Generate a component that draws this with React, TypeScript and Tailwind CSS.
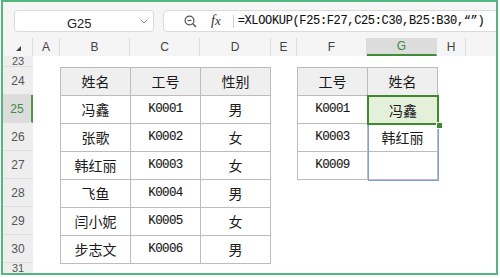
import React from "react";

const CJK = "font-['Noto_Sans_CJK_SC','Noto_Sans',sans-serif]";
const MONO = "font-['Liberation_Mono','Noto_Sans_CJK_SC',monospace] [-webkit-text-stroke:0.12px_#111]";

const cols: { l: string; w: string; sel?: boolean }[] = [
  { l: "A", w: "w-[27px]" },
  { l: "B", w: "w-[70px]" },
  { l: "C", w: "w-[70px]" },
  { l: "D", w: "w-[71px]" },
  { l: "E", w: "w-[26px]" },
  { l: "F", w: "w-[70px]" },
  { l: "G", w: "w-[70px]", sel: true },
  { l: "H", w: "w-[29px]" },
];

const t1 = [
  ["冯鑫", "K0001", "男"],
  ["张歌", "K0002", "女"],
  ["韩红丽", "K0003", "女"],
  ["飞鱼", "K0004", "男"],
  ["闫小妮", "K0005", "女"],
  ["步志文", "K0006", "男"],
];

function Cell({ children, head, mono }: { children?: React.ReactNode; head?: boolean; mono?: boolean }) {
  return (
    <div
      className={`w-[70px] h-[28px] border-r border-b border-[#bcbcbc] flex items-center justify-center text-[#1a1a1a] ${
        head ? "bg-[#efefef]" : "bg-white"
      } ${mono ? `${MONO} text-[12.5px] tracking-[-0.6px]` : `${CJK} text-[14px]`}`}
    >
      {children}
    </div>
  );
}

export default function App() {
  return (
    <div className="w-[500px] h-[278px] bg-white">
      <div className="ml-[1px] w-[497px] h-[275px] border-2 border-[#52b67f] bg-[#f5f5f5] flex flex-col overflow-hidden font-['Liberation_Sans',sans-serif]">
        {/* toolbar */}
        <div className="h-[36px] shrink-0 flex items-start pt-[8px] pl-[11px] gap-[9px]">
          <div className="w-[140px] h-[22px] shrink-0 rounded-[4px] border border-[#dadada] bg-white flex items-center relative">
            <span className="absolute left-[52px] top-[3px] text-[13px] text-[#222]">G25</span>
            <svg className="absolute left-[125px] top-[8px]" width="8" height="5" viewBox="0 0 8 5">
              <path d="M0.5 0.5 L4 4 L7.5 0.5" fill="none" stroke="#888" strokeWidth="1" />
            </svg>
          </div>
          <div className="flex-1 h-[22px] -mr-[6px] rounded-l-[4px] border border-[#dadada] bg-white flex items-center">
            <svg className="ml-[20px] shrink-0" width="13" height="13" viewBox="0 0 13 13">
              <circle cx="5.5" cy="5.5" r="4.4" fill="none" stroke="#555" strokeWidth="1.2" />
              <path d="M3.5 5.5 H7.5" stroke="#555" strokeWidth="1.2" />
              <path d="M8.8 8.8 L12 12" stroke="#555" strokeWidth="1.4" />
            </svg>
            <span className="ml-[14px] text-[14px] italic text-[#333] font-['Liberation_Serif',serif] leading-none">
              f<span className="text-[13px]">x</span>
            </span>
            <div className="ml-[12px] w-px h-[13px] bg-[#cfcfcf]" />
            <span className={`ml-[4px] ${MONO} text-[12px] tracking-[-0.35px] text-[#111] whitespace-nowrap`}>
              {"=XLOOKUP(F25:F27,C25:C30,B25:B30,\u201C\u201D)"}
            </span>
          </div>
        </div>

        {/* column header */}
        <div className="h-[18px] shrink-0 flex bg-[#f5f5f5]">
          <div className="w-[30px] h-full shrink-0 flex items-center justify-center border-r border-[#dcdcdc]">
            <svg width="5" height="5" viewBox="0 0 5 5" className="ml-[2px] mt-[3px]">
              <path d="M5 0 L5 5 L0 5 Z" fill="#444" />
            </svg>
          </div>
          {cols.map((c) => (
            <div
              key={c.l}
              className={`${c.w} h-full shrink-0 flex items-center justify-center text-[12px] border-r border-[#dcdcdc] ${
                c.sel ? "bg-[#dcdcdc] text-[#3d8b3d] border-b-2 border-b-[#3f8c35]" : "text-[#444]"
              }`}
            >
              {c.l}
            </div>
          ))}
          <div className="flex-1" />
        </div>

        {/* body */}
        <div className="flex-1 flex min-h-0">
          <div className="w-[30px] shrink-0 flex flex-col bg-[#eeeeee] overflow-hidden">
            {[
              { n: "23", h: "h-[11px] text-[11px]" },
              { n: "24", h: "h-[28px] text-[12px]" },
              { n: "25", h: "h-[28px] text-[12px]", sel: true },
              { n: "26", h: "h-[28px] text-[12px]" },
              { n: "27", h: "h-[28px] text-[12px]" },
              { n: "28", h: "h-[28px] text-[12px]" },
              { n: "29", h: "h-[28px] text-[12px]" },
              { n: "30", h: "h-[28px] text-[12px]" },
              { n: "31", h: "flex-1 text-[11px]" },
            ].map((r) => (
              <div
                key={r.n}
                className={`${r.h} shrink-0 flex items-center justify-center leading-none border-b border-[#dedede] ${
                  r.sel ? "bg-[#dcdcdc] text-[#3d8b3d] border-r-2 border-r-[#4a9a3e]" : "text-[#555]"
                }`}
              >
                {r.n}
              </div>
            ))}
          </div>

          <div className="flex-1 bg-white flex items-start pt-[11px] pl-[27px] gap-[26px]">
            {/* table 1 */}
            <div className="border-l border-t border-[#bcbcbc] grid grid-cols-[70px_70px_70px]">
              <Cell head>姓名</Cell>
              <Cell head>工号</Cell>
              <Cell head>性别</Cell>
              {t1.map((r) => (
                <React.Fragment key={r[1]}>
                  <Cell>{r[0]}</Cell>
                  <Cell mono>{r[1]}</Cell>
                  <Cell>{r[2]}</Cell>
                </React.Fragment>
              ))}
            </div>

            {/* table 2 */}
            <div className="relative border-l border-t border-[#bcbcbc] grid grid-cols-[70px_70px]">
              <Cell head>工号</Cell>
              <Cell head>姓名</Cell>
              <Cell mono>K0001</Cell>
              <Cell>冯鑫</Cell>
              <Cell mono>K0003</Cell>
              <Cell>韩红丽</Cell>
              <Cell mono>K0009</Cell>
              <Cell></Cell>
              {/* blue range */}
              <div className="absolute left-[70px] top-[28px] w-[71px] h-[85px] border border-[#7f9fe3] pointer-events-none" />
              {/* selected cell */}
              <div className={`absolute left-[69px] top-[27px] w-[72px] h-[30px] border-2 border-[#3c8a2c] bg-[#e4f0da] flex items-center justify-center ${CJK} text-[14px] text-[#1a1a1a]`}>
                冯鑫
              </div>
              <div className="absolute left-[138px] top-[54px] w-[5px] h-[5px] bg-[#3c8a2c] border border-white box-content" />
            </div>
          </div>
        </div>
      </div>
    </div>
  );
}
